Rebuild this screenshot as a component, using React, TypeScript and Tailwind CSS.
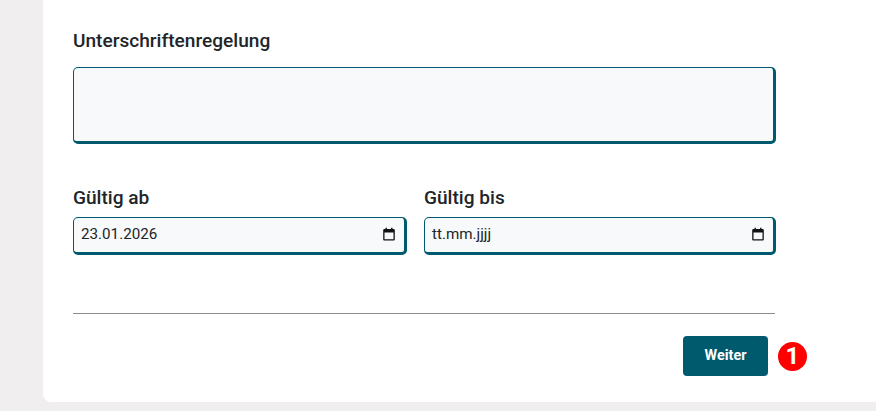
import { ReactNode } from 'react';

function CalendarIcon() {
  return (
    <svg width="14" height="14" viewBox="0 0 14 14" className="shrink-0 relative left-[1.500px] -top-[1px]" fill="none">
      <path
        d="M2.5 2h1V.8h1.400V2h4.200V.8h1.400V2h1c.8 0 1.300.6 1.300 1.300v8.900c0 .7-.5 1.300-1.300 1.300h-9c-.8 0-1.300-.6-1.300-1.300V3.300C1.200 2.600 1.700 2 2.500 2Zm0 3.500v6.700h9V5.500h-9Z"
        fill="#111"
      />
    </svg>
  );
}

function DateField({ label, value, className }: { label: string; value: string; className: string }) {
  return (
    <div className={className}>
      <div className="text-[19.1px] leading-[24px] font-medium text-[#212529] mb-[7px]">{label}</div>
      <div className="h-[38px] flex items-center justify-between pl-[7px] pr-[10px] bg-[#f8f9fa] rounded-[5px] border border-[#005a6e] border-r-[3px] border-b-[3px] text-[15.2px] text-[#212529]">
        <span className="relative -top-[1px]">{value}</span>
        <CalendarIcon />
      </div>
    </div>
  );
}

function Row({ children }: { children: ReactNode }) {
  return <div className="flex gap-[17px] w-[703px]">{children}</div>;
}

export default function App() {
  return (
    <div className="h-[411px] overflow-hidden bg-[#f0eeef] pl-[43px] pb-[9px] flex font-['Roboto',sans-serif]">
      <div className="flex-1 bg-white rounded-bl-[8px] pl-[30px] pt-[29px]">
        {/* Signature rule */}
        <div className="text-[19.1px] leading-[24px] font-medium text-[#212529] mb-[14px]">Unterschriftenregelung</div>
        <div className="w-[703px] h-[77px] bg-[#f8f9fa] rounded-[5px] border border-[#005a6e] border-r-[3px] border-b-[3px]" />

        {/* Validity */}
        <div className="mt-[42px]">
          <Row>
            <DateField label="Gültig ab" value="23.01.2026" className="w-[334px]" />
            <DateField label="Gültig bis" value="tt.mm.jjjj" className="w-[352px]" />
          </Row>
        </div>

        <div className="w-[702px] h-px bg-[#8c8c8c] mt-[58px]" />

        <div className="w-[734px] flex items-center justify-end gap-[10px] mt-[22px]">
          <button className="w-[85px] h-[40px] rounded-[4px] bg-[#005a6e] text-white text-[14.4px] font-bold">Weiter</button>
          <div className="w-[29px] h-[29px] rounded-full bg-[#ff0000] text-white text-[24px] leading-[29px] font-bold text-center">1</div>
        </div>
      </div>
    </div>
  );
}
